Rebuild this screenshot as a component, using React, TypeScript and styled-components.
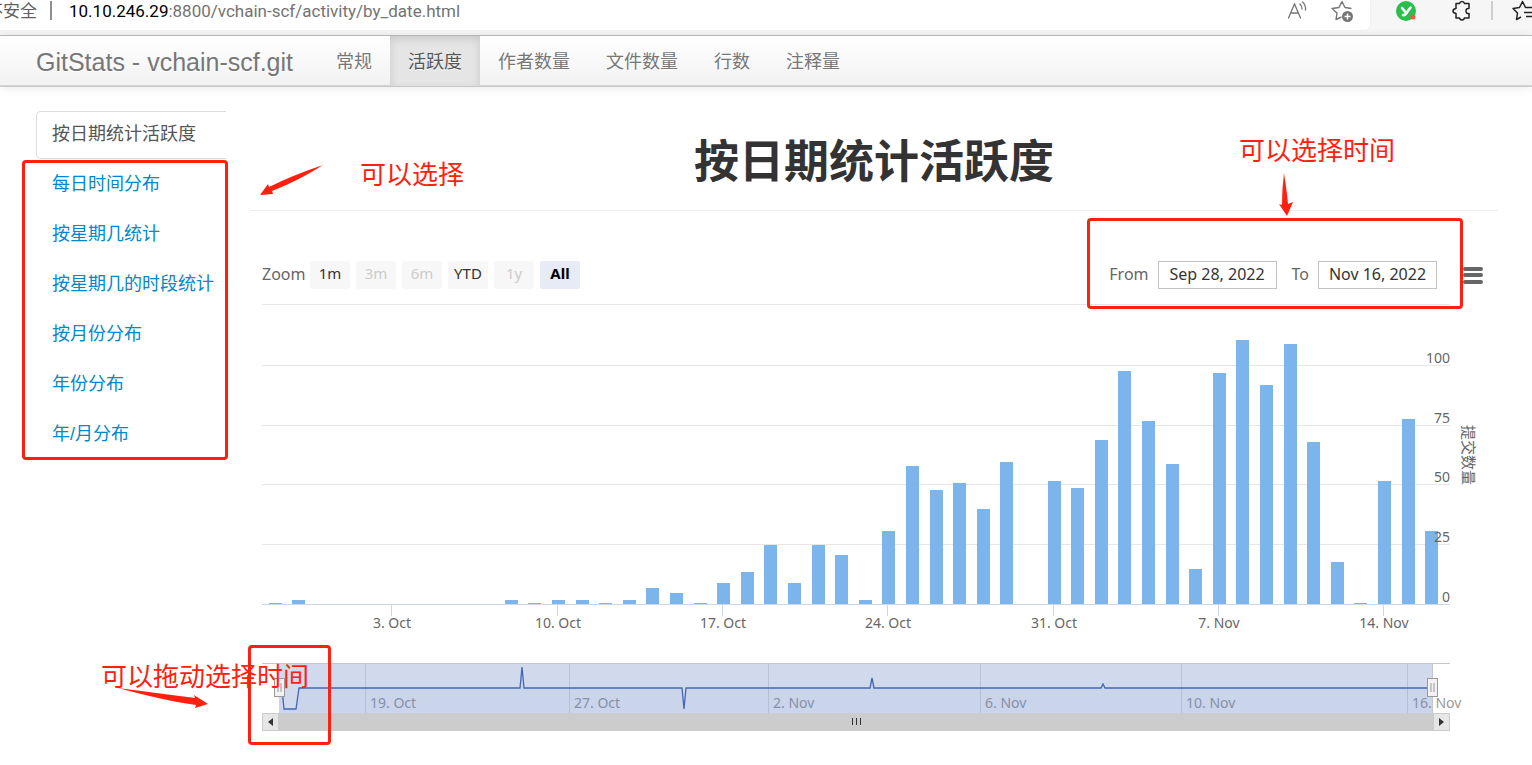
import React from "react";
import styled, { createGlobalStyle, css } from "styled-components";

const RED = "#ff2010";
const CHART_FONT = `"Noto Sans", "Noto Sans CJK SC", sans-serif`;

const GlobalStyle = createGlobalStyle`
  *, *::before, *::after { box-sizing: border-box; }
  body {
    margin: 0;
    background: #fff;
    color: #333;
    font: 18px/26px "Liberation Sans", "Noto Sans CJK SC", sans-serif;
    overflow-x: hidden;
  }
`;

/* ---------- browser strip ---------- */

const BrowserBar = styled.div`
  display: flex;
  height: 36px;
  background: #f6f6f6;
  border-bottom: 1px solid #bdbdbd;
  overflow: hidden;
`;

const AddressBox = styled.div`
  flex: 1;
  min-width: 0;
  height: 30px;
  padding-right: 15px;
  display: flex;
  align-items: flex-start;
  background: #fff;
  border-radius: 0 0 6px 0;
  box-shadow: 0 0 2px rgba(0, 0, 0, 0.08);
  font-family: Roboto, "Noto Sans CJK SC", sans-serif;
  font-size: 17px;
  line-height: 22px;
  white-space: nowrap;
`;

const Insecure = styled.span`
  margin: 0 13px 0 -14px;
  color: #5f5f5f;
`;

const Divider = styled.span<{ $dark?: boolean }>`
  width: 2px;
  height: 19px;
  margin-top: 1px;
  background: ${(p) => (p.$dark ? "#8f8f8f" : "#cdcdcd")};
`;

const Url = styled.span`
  flex: 1;
  margin-left: 17px;
  color: #737373;
  b { font-weight: 400; color: #000; }
`;

const IconButton = styled.button`
  display: block;
  padding: 0;
  border: 0;
  background: none;
  height: 22px;
  svg { display: block; }
`;

const AddressIcons = styled.div`
  display: flex;
  gap: 22px;
`;

const Extensions = styled.div`
  width: 162px;
  padding-left: 25px;
  display: flex;
  align-items: flex-start;
  gap: 35px;
  overflow: hidden;
  > * { flex: none; }
`;

const BrowserTools = styled.div`
  display: flex;
  align-items: flex-start;
  gap: 19px;
`;

/* ---------- site navigation ---------- */

const NavBar = styled.nav`
  height: 50px;
  padding-left: 36px;
  display: flex;
  background: linear-gradient(#fff, #f2f2f2);
  border-bottom: 1px solid #d4d4d4;
  box-shadow: 0 1px 10px rgba(0, 0, 0, 0.1), 0 1px 0 #d4d4d4;
  text-shadow: 0 1px 0 #fff;
`;

const Brand = styled.a`
  width: 282px;
  color: #777;
  font-size: 25px;
  line-height: 52px;
  text-decoration: none;
  white-space: nowrap;
`;

const NavLink = styled.a<{ $active?: boolean }>`
  height: 50px;
  padding: 0 18px;
  line-height: 52px;
  color: #777;
  text-decoration: none;
  white-space: nowrap;
  ${(p) =>
    p.$active &&
    css`
      color: #555;
      background: #e5e5e5;
      box-shadow: inset 0 3px 8px rgba(0, 0, 0, 0.125);
    `}
`;

/* ---------- page body ---------- */

const Page = styled.div`
  display: flex;
  padding: 25px 34px 20px 36px;
`;

const SideBar = styled.aside`
  position: relative;
  flex: none;
  width: 190px;
  margin-right: 24px;
`;

const SideLink = styled.a<{ $active?: boolean }>`
  display: block;
  height: 48px;
  margin-bottom: 2px;
  padding-left: 15px;
  border: 1px solid transparent;
  border-right: 0;
  border-radius: 5px 0 0 5px;
  border-color: ${(p) => (p.$active ? "#ddd" : "transparent")};
  color: ${(p) => (p.$active ? "#555" : "#0088cc")};
  line-height: 44px;
  text-decoration: none;
  white-space: nowrap;
`;

const Main = styled.main`
  position: relative;
  flex: 1;
  min-width: 0;
`;

const Title = styled.h1`
  margin: 0;
  height: 100px;
  border-bottom: 1px solid #eee;
  color: #333;
  font-size: 45px;
  line-height: 104px;
  font-weight: 700;
  text-align: center;
`;

/* ---------- chart ---------- */

const Toolbar = styled.div`
  display: flex;
  align-items: center;
  margin-top: 50px;
  padding: 0 15px 0 12px;
  height: 28px;
  color: #666;
  font: 16px/26px ${CHART_FONT};
`;

const Caption = styled.span`
  padding-bottom: 2px;
`;

const ZoomLabel = styled(Caption)`
  width: 48px;
`;

const Ranges = styled.div`
  flex: 1;
  display: flex;
  gap: 6px;
`;

const RangeButton = styled.button<{ $selected?: boolean }>`
  width: 40px;
  height: 28px;
  padding: 0 0 4px;
  border: 0;
  border-radius: 2px;
  background: ${(p) => (p.$selected ? "#e6ebf5" : "#f7f7f7")};
  color: ${(p) => (p.$selected ? "#000" : "#333")};
  font: ${(p) => (p.$selected ? 700 : 400)} 15px/24px ${CHART_FONT};
  &:disabled { color: #ccc; }
`;

const DateField = styled.label`
  display: flex;
  align-items: center;
  gap: 9px;
  margin-right: 15px;
`;

const DateInput = styled.input`
  width: 119px;
  height: 28px;
  padding: 0 0 3px;
  border: 1px solid #c2c2c2;
  background: #fff;
  color: #333;
  font: 16px/22px ${CHART_FONT};
  text-align: center;
`;

const MenuButton = styled.button`
  width: 20px;
  height: 17px;
  margin-left: 11px;
  padding: 0;
  border: 0;
  background: none;
  display: flex;
  flex-direction: column;
  justify-content: space-between;
  span { height: 4px; border-radius: 2px; background: #666; }
`;

const ChartSvg = styled.svg`
  display: block;
  width: 100%;
  height: auto;
  overflow: visible;
  font-family: ${CHART_FONT};
  font-size: 14px;
`;

const PlotWrap = styled.div`
  margin-top: 11px;
`;

const NavigatorWrap = styled.div`
  position: relative;
`;

const ScrollBar = styled.div`
  display: flex;
  height: 18px;
  margin: 0 48px 0 12px;
  background: #ccc;
`;

const ScrollButton = styled.button`
  width: 17px;
  padding: 0;
  border: 1px solid #ccc;
  background: #e6e6e6;
  display: grid;
  place-items: center;
`;

const ScrollThumb = styled.div`
  flex: 1;
  display: flex;
  justify-content: center;
  gap: 3px;
  padding-top: 5px;
  span { width: 1px; height: 7px; background: #333; }
`;

/* ---------- hand-made annotations ---------- */

const Mark = styled.div<{ $box: string; $width?: number; $height?: number }>`
  position: absolute;
  inset: ${(p) => p.$box};
  ${(p) => p.$width && `width: ${p.$width}px;`}
  ${(p) => p.$height && `height: ${p.$height}px;`}
  border: 3px solid ${RED};
  border-radius: 4px;
  pointer-events: none;
`;

const Note = styled.div<{ $top: number; $left?: number; $right?: number }>`
  position: absolute;
  top: ${(p) => p.$top}px;
  ${(p) => p.$left !== undefined && `left: ${p.$left}px;`}
  ${(p) => p.$right !== undefined && `right: ${p.$right}px;`}
  color: ${RED};
  font-size: 26px;
  line-height: 36px;
  white-space: nowrap;
`;

const Arrow = styled.svg<{ $top: number; $left?: number; $right?: number }>`
  position: absolute;
  top: ${(p) => p.$top}px;
  ${(p) => p.$left !== undefined && `left: ${p.$left}px;`}
  ${(p) => p.$right !== undefined && `right: ${p.$right}px;`}
  fill: ${RED};
`;

const navItems = ["常规", "活跃度", "作者数量", "文件数量", "行数", "注释量"];
const sideItems = [
  "按日期统计活跃度",
  "每日时间分布",
  "按星期几统计",
  "按星期几的时段统计",
  "按月份分布",
  "年份分布",
  "年/月分布",
];
const ranges = [
  { label: "1m" },
  { label: "3m", disabled: true },
  { label: "6m", disabled: true },
  { label: "YTD" },
  { label: "1y", disabled: true },
  { label: "All", selected: true },
];

// Commits per day, Sep 28 to Nov 16
const commits = [
  1, 2, 0, 0, 0, 0, 0, 0, 0, 0, 2, 1, 2, 2, 1, 2, 7, 5, 1, 9, 14, 25, 9, 25, 21,
  2, 31, 58, 48, 51, 40, 60, 0, 52, 49, 69, 98, 77, 59, 15, 97, 111, 92, 109, 68,
  18, 1, 52, 78, 31,
];
const gridLines = [
  { y: 4, label: "" },
  { y: 65, label: "100" },
  { y: 125, label: "75" },
  { y: 184, label: "50" },
  { y: 244, label: "25" },
  { y: 304, label: "0" },
];
const weeks = ["3. Oct", "10. Oct", "17. Oct", "24. Oct", "31. Oct", "7. Nov", "14. Nov"];
const navTicks = [
  { x: 115, label: "19. Oct" },
  { x: 319, label: "27. Oct" },
  { x: 518, label: "2. Nov" },
  { x: 730, label: "6. Nov" },
  { x: 931, label: "10. Nov" },
  { x: 1157, label: "16. Nov" },
];
const navLine =
  "M29 25H32L34 46H46L49 25H270L272 4L274 25H432L434 46L436 25H620L622 15L624 25H851L853 21L855 25H1183";

function Plot() {
  return (
    <ChartSvg viewBox="0 0 1248 363" role="img" aria-label="提交数量">
      {gridLines.map((g) => (
        <rect key={g.y} x="12" y={g.y} width="1188" height="1" fill={g.label === "0" ? "#ccd6eb" : "#e6e6e6"} />
      ))}
      {commits.map((n, i) => {
        const top = Math.round(305 - n * 2.39);
        return n ? (
          <rect key={i} x={Math.round(18.7 + i * 23.6)} y={top} width="13" height={304 - top} fill="#7cb5ec" />
        ) : null;
      })}
      <g fill="#666" textAnchor="middle">
        {weeks.map((w, k) => {
          const x = Math.round(141.3 + k * 165.3);
          return (
            <g key={w}>
              <rect x={x} y="305" width="1" height="11" fill="#ccd6eb" />
              <text x={x + 1} y="328">{w}</text>
            </g>
          );
        })}
      </g>
      <g fill="#666" textAnchor="end">
        {gridLines.map((g) => (
          <text key={g.y} x="1200" y={g.y - 2}>{g.label}</text>
        ))}
      </g>
      <text fill="#666" fontSize="15" textAnchor="middle" transform="translate(1213 155) rotate(90)">
        提交数量
      </text>
    </ChartSvg>
  );
}

function Handle({ x }: { x: number }) {
  return (
    <g>
      <rect x={x - 5} y="15.5" width="10" height="18" fill="#f2f2f2" stroke="#999" />
      <path d={`M${x - 1.5} 20v9M${x + 1.5} 20v9`} stroke="#999" />
    </g>
  );
}

function Navigator() {
  return (
    <ChartSvg viewBox="0 0 1248 50" role="img" aria-label="时间范围">
      {navTicks.map((t) => (
        <g key={t.x}>
          <rect x={t.x} y="0" width="1" height="50" fill="#e0e0e0" />
          <text x={t.x + 5} y="45" fill="#999">{t.label}</text>
        </g>
      ))}
      <path d={`${navLine}V50H29Z`} fill="#335cad" fillOpacity="0.05" />
      <path d={navLine} fill="none" stroke="#335cad" strokeWidth="1.3" />
      <rect x="29" y="0" width="1154" height="50" fill="#6685c2" fillOpacity="0.3" />
      <path d="M12 .5H1200M1182.500 0V50" stroke="#c4c6ca" />
      <Handle x={29.5} />
      <Handle x={1182.5} />
    </ChartSvg>
  );
}

export default function App() {
  return (
    <>
      <GlobalStyle />
      <BrowserBar>
        <AddressBox>
          <Insecure>不安全</Insecure>
          <Divider $dark />
          <Url><b>10.10.246.29</b>:8800/vchain-scf/activity/by_date.html</Url>
          <AddressIcons>
            <IconButton aria-label="朗读此页">
              <svg width="22" height="22" fill="none" stroke="#767676" strokeWidth="1.3" strokeLinecap="round">
                <path d="M1.500 18L7.500 4L13.500 18M3.500 13H11.500M13 4Q15 6 15 9M15.500 2Q19 5 18.500 10" />
              </svg>
            </IconButton>
            <IconButton aria-label="添加到收藏夹">
              <svg width="24" height="24" fill="none" stroke="#767676" strokeWidth="1.4" strokeLinejoin="round">
                <path d="M10.500 17L5 19.500L6 13L1 8.500L8 7.500L11 1.500L14 7.500L20.500 8.500" />
                <circle cx="16.500" cy="16.500" r="5.500" fill="#767676" stroke="none" />
                <path d="M16.500 13.500V19.500M13.500 16.500H19.500" stroke="#fff" />
              </svg>
            </IconButton>
          </AddressIcons>
        </AddressBox>
        <Extensions>
          <IconButton aria-label="扩展 Y">
            <svg width="22" height="22">
              <circle cx="11" cy="11" r="10" fill="#26c04a" />
              <path d="M7 8L10 11.500M15.500 7.500L11.500 13Q10 15.500 8 15" fill="none" stroke="#fff" strokeWidth="2.600" strokeLinecap="round" />
              <circle cx="18" cy="17" r="2.500" fill="#ff5148" />
            </svg>
          </IconButton>
          <BrowserTools>
            <IconButton aria-label="扩展">
              <svg width="20" height="22" fill="none" stroke="#222" strokeWidth="1.500" strokeLinejoin="round">
                <path d="M4 3.500H7.500Q8 1.500 10 1.500Q12 1.500 12.500 3.500H17V8.500Q14 8 14 11Q14 14 17 13.500V18H12.500Q12 20 10 20Q8 20 7.500 18H4V13.500Q1 13 1 11Q1 9 4 8.500Z" />
              </svg>
            </IconButton>
            <Divider />
            <IconButton aria-label="收藏夹">
              <svg width="26" height="22" fill="none" stroke="#222" strokeWidth="1.500" strokeLinejoin="round">
                <path d="M9 17L4.500 19.500L5.500 13L1 8.500L7.500 7.500L10.500 1.500L13.500 7.500H24M12 12.500H24M14 16.500H24" />
              </svg>
            </IconButton>
          </BrowserTools>
        </Extensions>
      </BrowserBar>

      <NavBar>
        <Brand href="#">GitStats - vchain-scf.git</Brand>
        {navItems.map((item) => (
          <NavLink key={item} href="#" $active={item === "活跃度"}>{item}</NavLink>
        ))}
      </NavBar>

      <Page>
        <SideBar>
          {sideItems.map((item, i) => (
            <SideLink key={item} href="#" $active={i === 0}>{item}</SideLink>
          ))}
          <Mark $box="49px -2px auto -14px" $height={300} />
        </SideBar>

        <Main>
          <Title>按日期统计活跃度</Title>
          <Toolbar>
            <ZoomLabel>Zoom</ZoomLabel>
            <Ranges>
              {ranges.map((r) => (
                <RangeButton key={r.label} disabled={r.disabled} $selected={r.selected}>{r.label}</RangeButton>
              ))}
            </Ranges>
            <DateField><Caption>From</Caption><DateInput defaultValue="Sep 28, 2022" /></DateField>
            <DateField><Caption>To</Caption><DateInput defaultValue="Nov 16, 2022" /></DateField>
            <MenuButton aria-label="图表菜单"><span /><span /><span /></MenuButton>
          </Toolbar>
          <PlotWrap><Plot /></PlotWrap>
          <NavigatorWrap>
            <Navigator />
            <ScrollBar>
              <ScrollButton aria-label="向左滚动">
                <svg width="5" height="8"><path d="M5 0V8L0 4Z" fill="#333" /></svg>
              </ScrollButton>
              <ScrollThumb><span /><span /><span /></ScrollThumb>
              <ScrollButton aria-label="向右滚动">
                <svg width="5" height="8"><path d="M0 0V8L5 4Z" fill="#333" /></svg>
              </ScrollButton>
            </ScrollBar>
            <Mark $box="-18px auto auto -2px" $width={83} $height={100} />
            <Note $top={-4} $left={-149}>可以拖动选择时间</Note>
            <Arrow $top={24} $left={-134} width="94" height="24">
              <path d="M2 1Q40 6 79 11L78 8L92 17L79 21L80 18Q50 14 2 1Z" />
            </Arrow>
          </NavigatorWrap>

          <Note $top={46} $left={110}>可以选择</Note>
          <Arrow $top={52} $left={8} width="66" height="34">
            <path d="M65 2Q42 17 14 28L15 31L2 32L10 21L11 24Q35 12 65 2Z" />
          </Arrow>
          <Note $top={22} $right={103}>可以选择时间</Note>
          <Arrow $top={61} $right={203} width="20" height="46">
            <path d="M9 1Q12 20 13 32L18 30L12 44L4 32L7 33Q7 16 9 1Z" />
          </Arrow>
          <Mark $box="107px 35px auto auto" $width={376} $height={91} />
        </Main>
      </Page>
    </>
  );
}
